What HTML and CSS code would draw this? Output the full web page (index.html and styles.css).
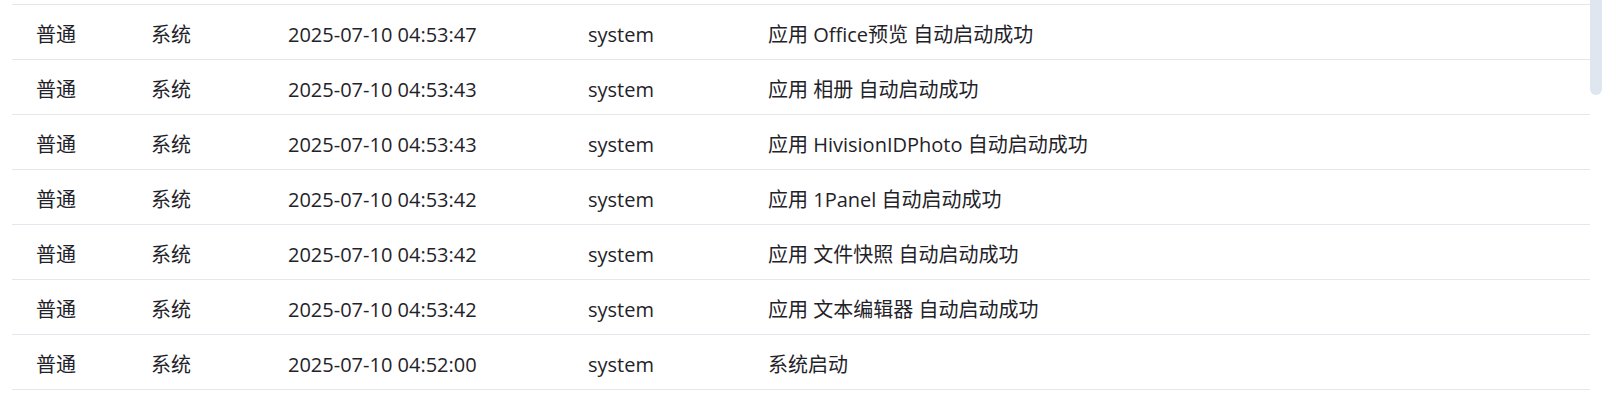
FILE: index.html
```html
<!DOCTYPE html>
<html lang="zh-CN">
<head>
<meta charset="utf-8">
<title>日志</title>
<link rel="stylesheet" href="styles.css">
</head>
<body>
<div class="page">
  <div class="table">
    <div class="row"><div class="cell">普通</div><div class="cell">系统</div><div class="cell">2025-07-10 04:53:47</div><div class="cell">system</div><div class="cell">应用 Office预览 自动启动成功</div></div>
    <div class="row"><div class="cell">普通</div><div class="cell">系统</div><div class="cell">2025-07-10 04:53:43</div><div class="cell">system</div><div class="cell">应用 相册 自动启动成功</div></div>
    <div class="row"><div class="cell">普通</div><div class="cell">系统</div><div class="cell">2025-07-10 04:53:43</div><div class="cell">system</div><div class="cell">应用 HivisionIDPhoto 自动启动成功</div></div>
    <div class="row"><div class="cell">普通</div><div class="cell">系统</div><div class="cell">2025-07-10 04:53:42</div><div class="cell">system</div><div class="cell">应用 1Panel 自动启动成功</div></div>
    <div class="row"><div class="cell">普通</div><div class="cell">系统</div><div class="cell">2025-07-10 04:53:42</div><div class="cell">system</div><div class="cell">应用 文件快照 自动启动成功</div></div>
    <div class="row"><div class="cell">普通</div><div class="cell">系统</div><div class="cell">2025-07-10 04:53:42</div><div class="cell">system</div><div class="cell">应用 文本编辑器 自动启动成功</div></div>
    <div class="row"><div class="cell">普通</div><div class="cell">系统</div><div class="cell">2025-07-10 04:52:00</div><div class="cell">system</div><div class="cell">系统启动</div></div>
  </div>
  <div class="scrollbar"><div class="thumb"></div></div>
</div>
</body>
</html>
```

FILE: styles.css
```css
html, body {
  margin: 0;
  padding: 0;
  background: #ffffff;
  overflow: hidden;
}
.page {
  display: flex;
  align-items: flex-start;
  padding-left: 12px;
  height: 401px;
  font-family: "Open Sans", "Noto Sans CJK SC", sans-serif;
  font-size: 20px;
  color: #1f2329;
}
.table {
  width: 1578px;
  margin-top: 4px;
  border-top: 1px solid #e4e8ee;
}
.row {
  display: grid;
  grid-template-columns: 115px 137px 300px 180px 1fr;
  height: 54px;
  align-items: center;
  border-bottom: 1px solid #e4e8ee;
}
.cell {
  padding-left: 24px;
  padding-top: 5px;
  white-space: nowrap;
  line-height: 24px;
}
.scrollbar {
  width: 12px;
  height: 401px;
}
.thumb {
  width: 12px;
  height: 95px;
  background: #dfe6ef;
  border-radius: 0 0 6px 6px;
}
```
